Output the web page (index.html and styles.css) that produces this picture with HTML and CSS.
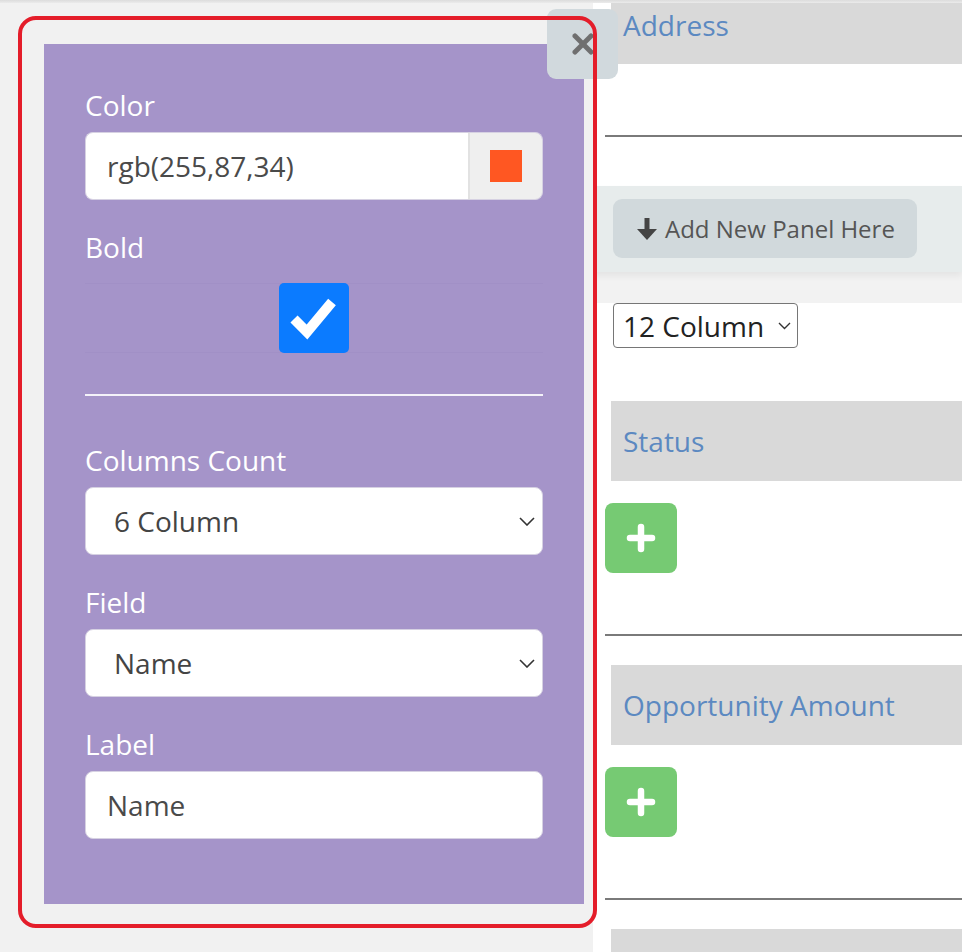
FILE: index.html
```html
<!DOCTYPE html>
<html lang="en">
<head>
<meta charset="utf-8">
<title>Panel field editor</title>
<link rel="stylesheet" href="styles.css">
</head>
<body>
<div class="topbar"></div>
<div class="page">
  <aside class="sidebar">
    <div class="panel">
      <div class="group">
        <label class="label">Color</label>
        <div class="color-group">
          <input class="input color-input" type="text" value="rgb(255,87,34)">
          <span class="addon"><span class="swatch"></span></span>
        </div>
      </div>
      <div class="group">
        <label class="label label-bold">Bold</label>
        <div class="check-row">
          <span class="checkbox">
            <svg width="70" height="70" viewBox="0 0 70 70"><polyline points="15,36 28,49 53,19" fill="none" stroke="#fff" stroke-width="10"/></svg>
          </span>
        </div>
      </div>
      <hr class="divider">
      <div class="group">
        <label class="label">Columns Count</label>
        <div class="select-wrap">
          <select class="select"><option>6 Column</option></select>
          <svg class="chev" width="16" height="9" viewBox="0 0 16 9"><polyline points="1,1 8,8 15,1" fill="none" stroke="#333" stroke-width="1.6"/></svg>
        </div>
      </div>
      <div class="group">
        <label class="label">Field</label>
        <div class="select-wrap">
          <select class="select"><option>Name</option></select>
          <svg class="chev" width="16" height="9" viewBox="0 0 16 9"><polyline points="1,1 8,8 15,1" fill="none" stroke="#333" stroke-width="1.6"/></svg>
        </div>
      </div>
      <div class="group">
        <label class="label">Label</label>
        <input class="input" type="text" value="Name">
      </div>
    </div>
    <button class="close-btn" type="button" aria-label="Close">
      <svg width="22" height="22" viewBox="0 0 22 22"><line x1="3" y1="3" x2="19" y2="19" stroke="#6f6f6f" stroke-width="5" stroke-linecap="round"/><line x1="19" y1="3" x2="3" y2="19" stroke="#6f6f6f" stroke-width="5" stroke-linecap="round"/></svg>
    </button>
    <div class="highlight"></div>
  </aside>

  <main class="canvas">
    <section class="field">
      <div class="field-head field-head-top">Address</div>
      <hr class="rule rule-address">
    </section>

    <div class="dropzone">
      <div class="dropband">
        <button class="add-panel" type="button">
          <svg width="20" height="22" viewBox="0 0 20 22"><rect x="7.5" y="0" width="5" height="12" fill="#444"/><polygon points="0,11 20,11 10,22" fill="#444"/></svg>
          <span>Add New Panel Here</span>
        </button>
      </div>
    </div>

    <div class="col-select-wrap">
      <select class="col-select"><option>12 Column</option></select>
      <svg class="chev-small" width="13" height="8" viewBox="0 0 13 8"><polyline points="1,1 6.5,6.5 12,1" fill="none" stroke="#333" stroke-width="1.4"/></svg>
    </div>

    <section class="field field-first">
      <div class="field-head">Status</div>
      <button class="add-btn" type="button" aria-label="Add">
        <svg width="30" height="30" viewBox="0 0 30 30"><line x1="15" y1="4" x2="15" y2="26" stroke="#fff" stroke-width="6.5" stroke-linecap="round"/><line x1="4" y1="15" x2="26" y2="15" stroke="#fff" stroke-width="6.5" stroke-linecap="round"/></svg>
      </button>
      <hr class="rule">
    </section>

    <section class="field">
      <div class="field-head">Opportunity Amount</div>
      <button class="add-btn" type="button" aria-label="Add">
        <svg width="30" height="30" viewBox="0 0 30 30"><line x1="15" y1="4" x2="15" y2="26" stroke="#fff" stroke-width="6.5" stroke-linecap="round"/><line x1="4" y1="15" x2="26" y2="15" stroke="#fff" stroke-width="6.5" stroke-linecap="round"/></svg>
      </button>
      <hr class="rule">
    </section>

    <section class="field">
      <div class="field-head"></div>
    </section>
  </main>
</div>
</body>
</html>
```

FILE: styles.css
```css
* { box-sizing: border-box; }

html, body {
  margin: 0;
  padding: 0;
  height: 100%;
  overflow: hidden;
}

body {
  font-family: "Open Sans", "Noto Sans", sans-serif;
  background: #f1f1f1;
}

.topbar {
  height: 3px;
  background: linear-gradient(#dcdcdc, #ebebeb);
}

.page {
  display: flex;
  align-items: flex-start;
  height: 949px;
}

/* ---------- left editor ---------- */
.sidebar {
  position: relative;
  z-index: 2;
  flex: 0 0 593px;
  width: 593px;
  height: 100%;
  background: #f1f1f1;
  padding: 41px 0 0 44px;
}

.panel {
  width: 540px;
  background: #a594c9;
  padding: 42px 41px 65px 41px;
}

.group { margin-bottom: 28px; }
.group:last-child { margin-bottom: 0; }

.label {
  display: block;
  color: #fff;
  font-size: 28px;
  line-height: 38px;
  margin-bottom: 8px;
}

.label-bold { margin-bottom: 17px; }

.input {
  display: block;
  width: 100%;
  height: 68px;
  border: 1px solid #d6d1e2;
  border-radius: 8px;
  background: #fff;
  padding: 0 21px;
  font-family: "Open Sans", sans-serif;
  font-size: 28px;
  color: #4a4a4a;
  outline: none;
}

.color-group {
  display: flex;
  height: 68px;
}

.color-input {
  flex: 1;
  border-radius: 8px 0 0 8px;
  border-right: none;
}

.addon {
  flex: 0 0 75px;
  display: flex;
  align-items: center;
  justify-content: center;
  background: #efefef;
  border: 1px solid #d6d1e2;
  border-left: 2px solid #e2e2e2;
  border-radius: 0 8px 8px 0;
}

.swatch {
  width: 32px;
  height: 32px;
  background: rgb(255, 87, 34);
}

.check-row {
  height: 70px;
  display: flex;
  justify-content: center;
  border-top: 1px solid rgba(90, 70, 140, 0.045);
  border-bottom: 1px solid rgba(90, 70, 140, 0.045);
}

.checkbox {
  width: 70px;
  height: 70px;
  margin-top: -1px;
  background: #0b7bff;
  border-radius: 5px;
  display: block;
}

.checkbox svg { display: block; }

.divider {
  border: none;
  height: 2px;
  margin: 41px 0 45px 0;
  background: rgba(255, 255, 255, 0.88);
}

.select-wrap {
  position: relative;
  height: 68px;
}

.select {
  appearance: none;
  -webkit-appearance: none;
  display: block;
  width: 100%;
  height: 68px;
  border: 1px solid #d6d1e2;
  border-radius: 8px;
  background: #fff;
  padding: 0 28px;
  font-family: "Open Sans", sans-serif;
  font-size: 28px;
  color: #444;
  outline: none;
}

.chev {
  position: absolute;
  right: 8px;
  top: 30px;
  pointer-events: none;
}

.close-btn {
  position: absolute;
  left: 547px;
  top: 6px;
  width: 71px;
  height: 70px;
  border: none;
  border-radius: 9px;
  background: #d1d9dd;
  padding: 0;
  display: flex;
  align-items: center;
  justify-content: center;
  cursor: pointer;
}

.close-btn svg { display: block; }

.highlight {
  position: absolute;
  left: 18px;
  top: 13px;
  width: 579px;
  height: 912px;
  border: 4px solid #e41d2a;
  border-radius: 18px;
  pointer-events: none;
}

/* ---------- right canvas ---------- */
.canvas {
  flex: 1;
  height: 100%;
  background: #fff;
  overflow: hidden;
}

.field-head {
  margin-left: 18px;
  height: 80px;
  background: #d9d9d9;
  padding-left: 12px;
  display: flex;
  align-items: center;
  font-size: 28px;
  color: #5c89c1;
  white-space: nowrap;
}

.field-head-top {
  height: 61px;
  align-items: flex-start;
  padding-top: 3px;
  line-height: 38px;
}

.rule {
  border: none;
  height: 2px;
  background: #7a7a7a;
  margin: 61px 0 29px 12px;
}

.rule-address { margin: 71px 0 0 12px; }

.dropzone {
  margin-top: 49px;
  background: #f2f2f2;
  padding-bottom: 31px;
}

.dropband {
  height: 86px;
  background: #e7ecec;
  padding: 13px 0 0 20px;
  box-shadow: 0 4px 7px rgba(0, 0, 0, 0.06);
}

.add-panel {
  width: 304px;
  height: 59px;
  border: none;
  border-radius: 9px;
  background: #d1d9dc;
  padding: 0 0 0 24px;
  display: flex;
  align-items: center;
  gap: 8px;
  font-family: "Open Sans", sans-serif;
  font-size: 24px;
  color: #555;
  cursor: pointer;
}

.add-panel svg { flex: 0 0 auto; }

.col-select-wrap {
  position: relative;
  margin-left: 20px;
  width: 185px;
  height: 45px;
}

.col-select {
  appearance: none;
  -webkit-appearance: none;
  width: 185px;
  height: 45px;
  border: 1px solid #767676;
  border-radius: 4px;
  background: #fff;
  padding: 0 0 0 9px;
  font-family: "Open Sans", sans-serif;
  font-size: 28px;
  color: #222;
}

.chev-small {
  position: absolute;
  right: 7px;
  top: 19px;
  pointer-events: none;
}

.field-first { margin-top: 53px; }

.add-btn {
  margin: 22px 0 0 12px;
  width: 72px;
  height: 70px;
  border: none;
  border-radius: 8px;
  background: #76ca73;
  display: flex;
  align-items: center;
  justify-content: center;
  padding: 0;
  cursor: pointer;
}
```
